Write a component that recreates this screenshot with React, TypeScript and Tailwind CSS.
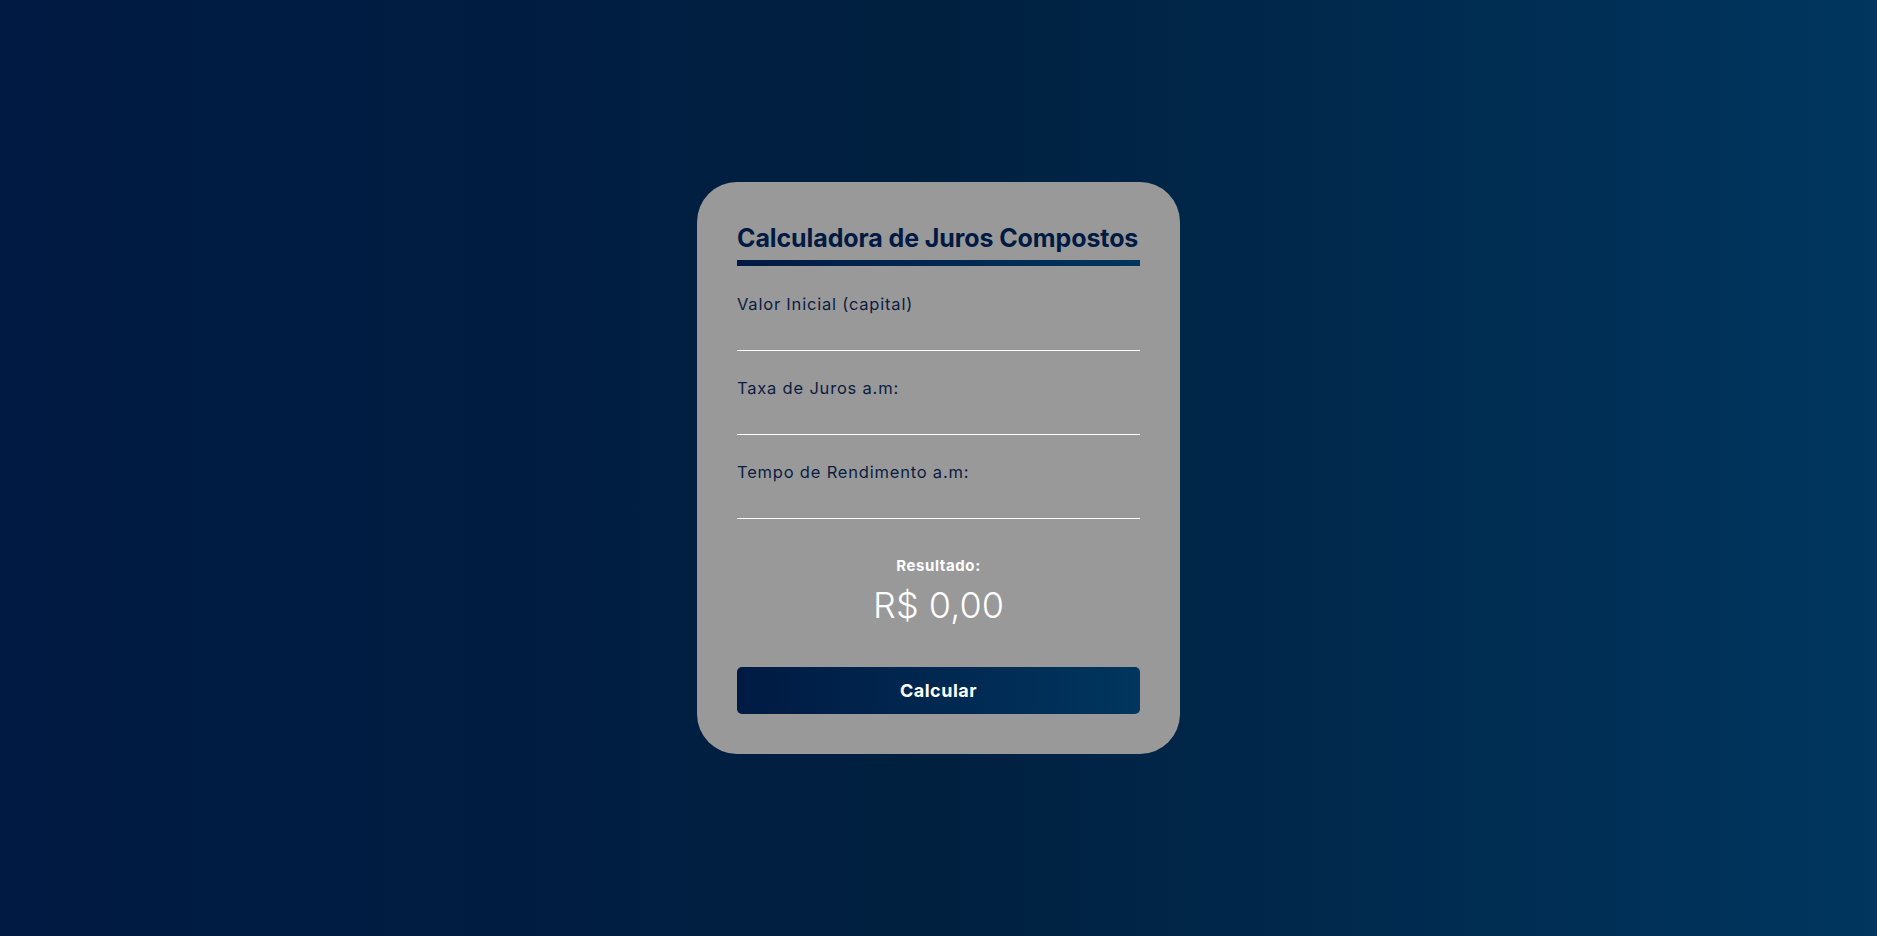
import { useState } from "react";

const fields = [
  { id: "capital", label: "Valor Inicial (capital)" },
  { id: "taxa", label: "Taxa de Juros a.m:" },
  { id: "tempo", label: "Tempo de Rendimento a.m:" },
];

const App = () => {
  const [values, setValues] = useState<Record<string, string>>({ capital: "", taxa: "", tempo: "" });
  const [result, setResult] = useState<number>(0);

  const calcular = () => {
    const c = parseFloat(values.capital.replace(",", ".")) || 0;
    const i = (parseFloat(values.taxa.replace(",", ".")) || 0) / 100;
    const t = parseFloat(values.tempo.replace(",", ".")) || 0;
    setResult(c * Math.pow(1 + i, t));
  };

  return (
    <main className="min-h-screen w-full flex items-center justify-center bg-gradient-to-r from-[#001a43] via-[#002040] to-[#00365f] font-['Inter','Open_Sans',sans-serif]">
      <div className="w-[483px] bg-[#999999] rounded-[40px] px-10 pt-10 pb-10 flex flex-col">
        <div className="pb-[5px]">
          <h1 className="text-[25px] leading-[33px] font-bold text-[#001a43] tracking-[-0.1px] whitespace-nowrap">Calculadora de Juros Compostos</h1>
        </div>
        <div className="h-[6px] w-full bg-gradient-to-r from-[#001a43] to-[#00365f]"></div>

        <div className="mt-[26px] flex flex-col gap-[25px]">
          {fields.map((f) => (
            <div key={f.id} className="flex flex-col">
              <label htmlFor={f.id} className="text-[16.5px] leading-[24px] tracking-[0.8px] text-[#0b1c42]">{f.label}</label>
              <input
                id={f.id}
                type="text"
                value={values[f.id]}
                onChange={(e) => setValues({ ...values, [f.id]: e.target.value })}
                className="h-[35px] w-full bg-transparent outline-none border-b border-white text-[#0b1c42] text-base"
              />
            </div>
          ))}
        </div>

        <div className="mt-[36px] flex flex-col items-center">
          <span className="text-[15px] leading-[22px] font-bold tracking-[0.6px] text-white">Resultado:</span>
          <span className="mt-[6px] text-[36px] leading-[44px] font-light text-white">R$ {result.toFixed(2).replace(".", ",")}</span>
        </div>

        <button
          onClick={calcular}
          className="mt-10 h-[47px] w-full rounded-[5px] bg-gradient-to-r from-[#001a43] to-[#00365f] text-white font-bold text-[18px] tracking-[0.5px] cursor-pointer"
        >
          Calcular
        </button>
      </div>
    </main>
  );
};

export default App;
